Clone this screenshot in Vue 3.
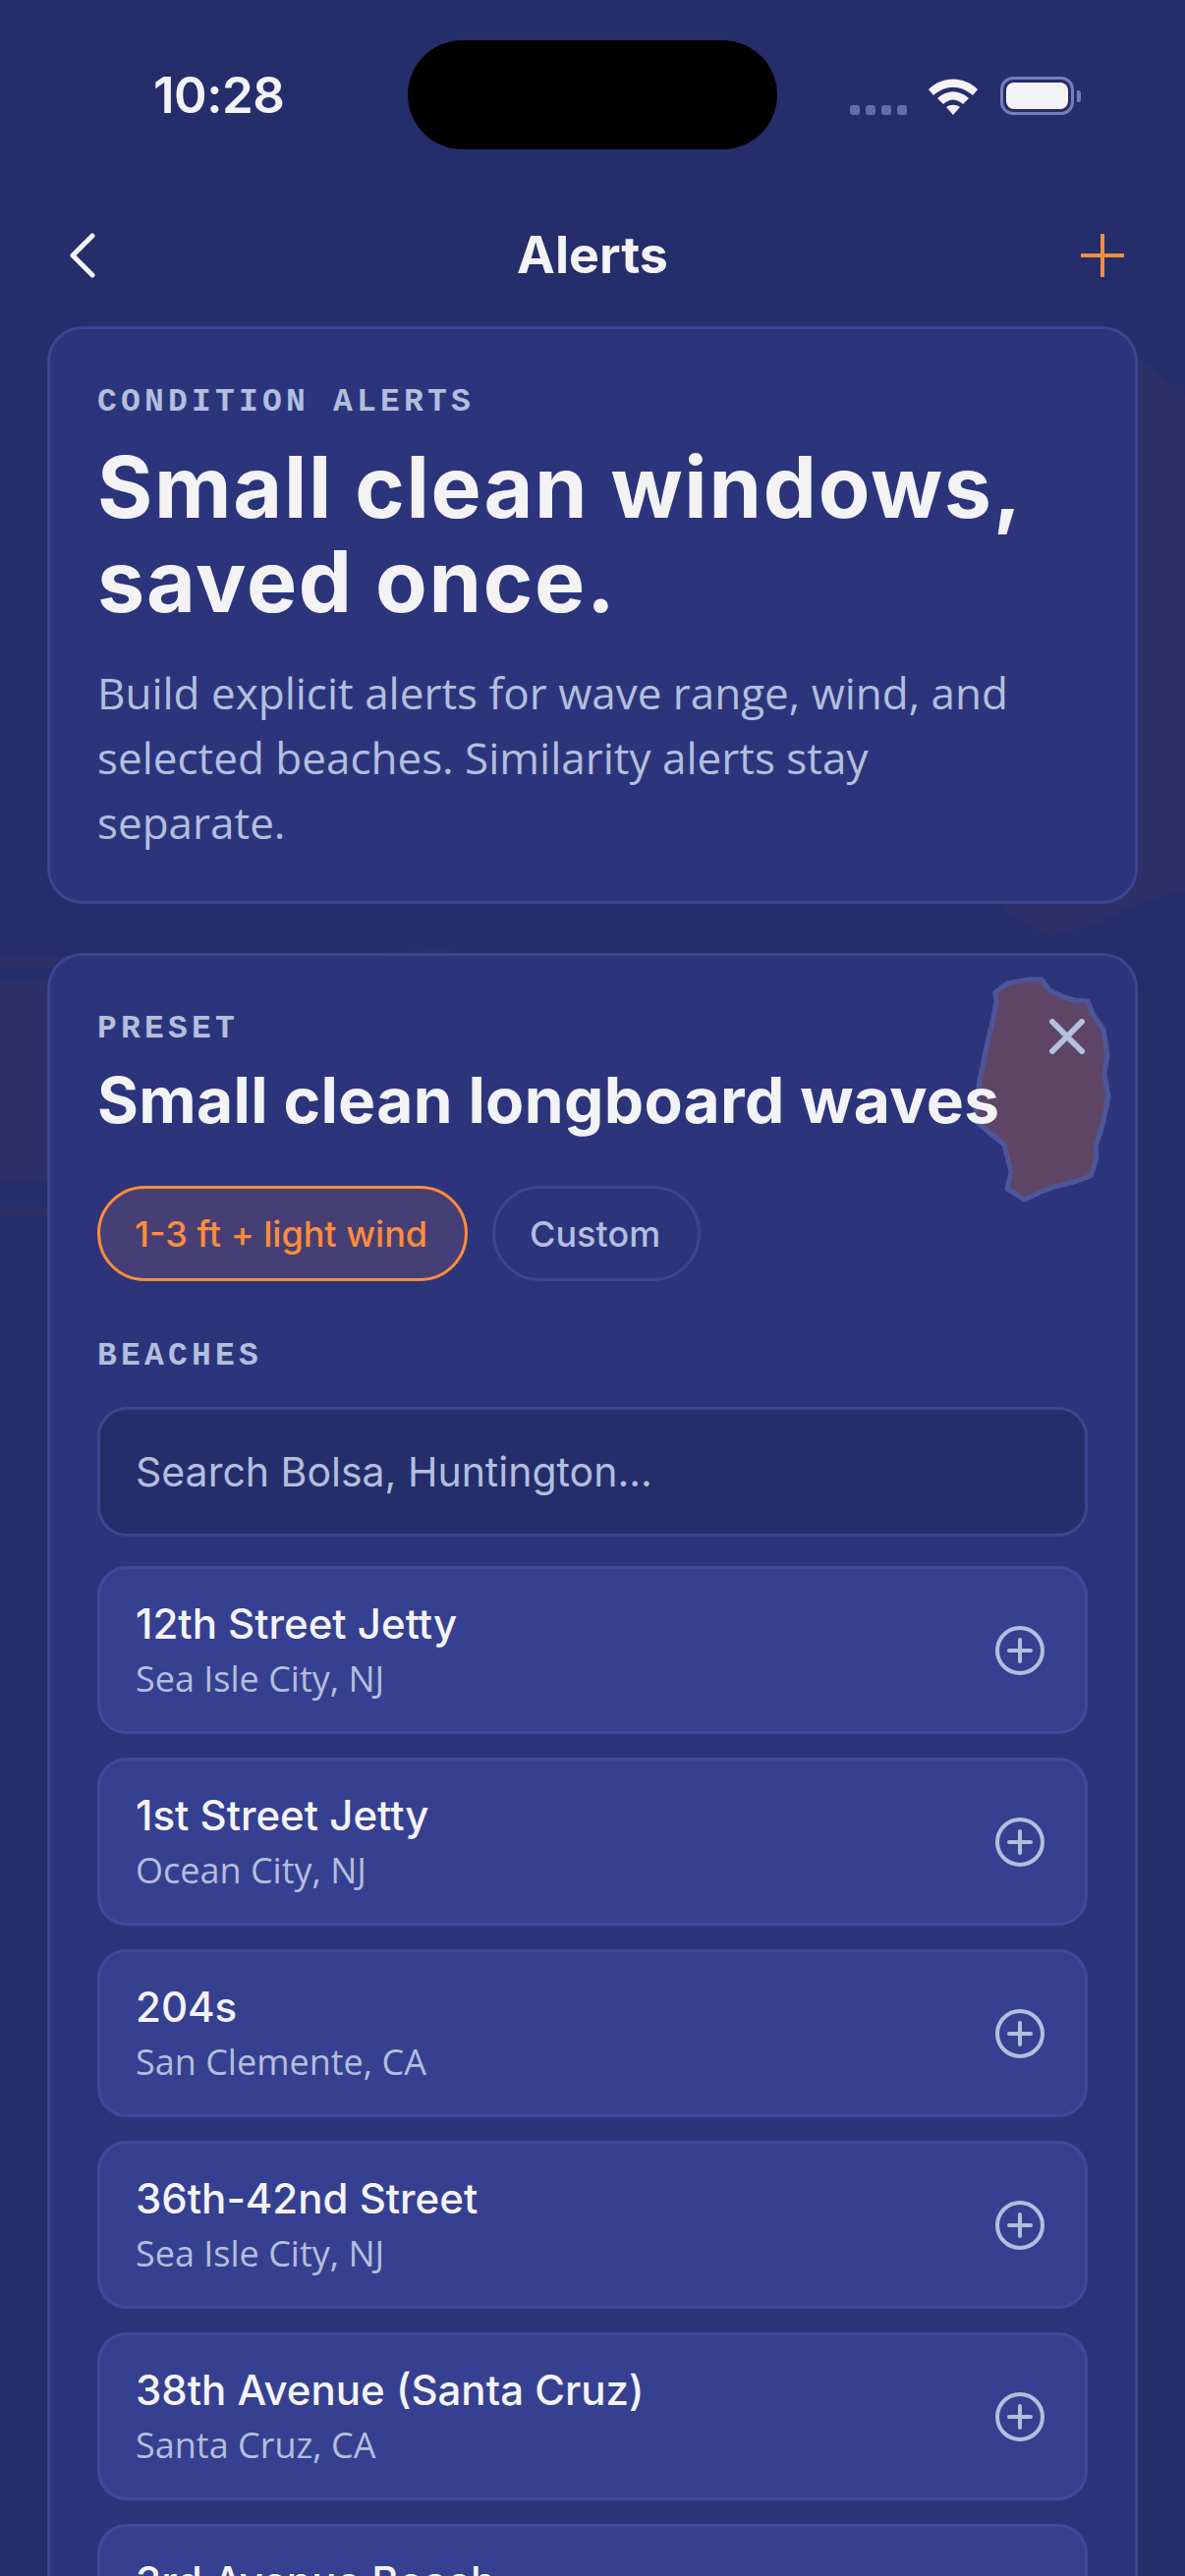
<script setup>
const beaches = [
  { name: '12th Street Jetty', place: 'Sea Isle City, NJ' },
  { name: '1st Street Jetty', place: 'Ocean City, NJ' },
  { name: '204s', place: 'San Clemente, CA' },
  { name: '36th-42nd Street', place: 'Sea Isle City, NJ' },
  { name: '38th Avenue (Santa Cruz)', place: 'Santa Cruz, CA' },
  { name: '3rd Avenue Beach' },
];
</script>

<template>
  <div class="screen">
    <svg class="land" viewBox="0 0 1206 2622" width="1206" height="2622" aria-hidden="true">
      <path class="land__shape" d="M1150 358 L1206 402 V907 L1167 916 L1113 942 L1067 953 L1020 925 Z" />
      <path class="land__shape" d="M0 973 H300 L460 966 V985 H0 Z M0 998 H120 V1203 H0 Z M0 1228 H60 V1238 H0 Z" />
    </svg>

    <header class="status">
      <span class="status__time">10:28</span>
      <span class="status__island"></span>
      <div class="status__icons">
        <div class="status__dots"><i></i><i></i><i></i><i></i></div>
        <svg class="status__wifi" viewBox="0 0 50 37" width="50" height="37">
          <path d="M0 11 C14 -3 36 -3 50 11 L45 17 C32 6 18 6 5 17 Z" />
          <path d="M9 20 C19 11 31 11 41 20 L35 26 C28 20 22 20 15 26 Z" />
          <path d="M18 29 C22 26 28 26 32 29 L25 37 Z" />
        </svg>
        <div class="status__battery"><b></b></div>
        <span class="status__cap"></span>
      </div>
    </header>

    <nav class="nav">
      <svg class="nav__back" viewBox="0 0 27 46" width="27" height="46">
        <path d="M24 3 L4 23 L24 43" />
      </svg>
      <h1 class="nav__title">Alerts</h1>
      <svg class="nav__add" viewBox="0 0 44 44" width="44" height="44">
        <path d="M22 0 V44 M0 22 H44" />
      </svg>
    </nav>

    <main class="content">
      <section class="card hero">
        <p class="label">CONDITION ALERTS</p>
        <h2 class="hero__title">Small clean windows, saved once.</h2>
        <p class="hero__text">Build explicit alerts for wave range, wind, and selected beaches. Similarity alerts stay separate.</p>
      </section>

      <section class="card preset">
        <svg class="preset__blob" viewBox="0 0 150 240" width="150" height="240" aria-hidden="true">
          <path d="M25 24 L37 15 L59 11 L72 11 L80 22 L95 29 L105 32 L119 33 L124 46 L135 62 L139 87 L136 107 L140 131 L134 159 L127 181 L128 192 L122 211 L105 217 L85 222 L69 228 L55 235 L37 224 L41 207 L34 179 L19 167 L4 154 L9 114 L15 84 L22 54 L26 34 Z" />
        </svg>
        <svg class="preset__close" viewBox="0 0 36 36" width="36" height="36">
          <path d="M3 3 L33 33 M33 3 L3 33" />
        </svg>
        <div class="preset__body">
          <p class="label label--small">PRESET</p>
          <h2 class="preset__title">Small clean longboard waves</h2>
          <div class="chips">
            <span class="chip chip--active">1-3 ft + light wind</span>
            <span class="chip">Custom</span>
          </div>
          <p class="label label--small label--beaches">BEACHES</p>
          <div class="search">Search Bolsa, Huntington...</div>
          <ul class="beaches">
            <li v-for="beach in beaches" :key="beach.name" class="beach">
              <div class="beach__text">
                <span class="beach__name">{{ beach.name }}</span>
                <span v-if="beach.place" class="beach__place">{{ beach.place }}</span>
              </div>
              <svg class="beach__add" viewBox="0 0 50 50" width="50" height="50">
                <circle cx="25" cy="25" r="23" />
                <path d="M25 14 V36 M14 25 H36" />
              </svg>
            </li>
          </ul>
        </div>
      </section>
    </main>
  </div>
</template>

<style>
html,
body {
  margin: 0;
  background: #252d6b;
}
</style>

<style scoped>
.screen {
  position: relative;
  width: 1206px;
  height: 2622px;
  overflow: hidden;
  background: #252d6b;
  color: #f3f3f5;
  font-family: Inter, 'Liberation Sans', sans-serif;
}

.land {
  position: absolute;
  inset: 0;
}

.land__shape {
  fill: #2c2f68;
}

.status {
  position: relative;
  display: grid;
  grid-template-columns: 1fr 376px 1fr;
  padding-top: 41px;
  height: 111px;
}

.status__time {
  padding-left: 156px;
  font-size: 51px;
  font-weight: 600;
  line-height: 111px;
  letter-spacing: -0.5px;
}

.status__island {
  height: 111px;
  background: #000;
  border-radius: 56px;
}

.status__icons {
  display: flex;
  align-items: flex-end;
  align-self: start;
  padding: 37px 0 0 74px;
}

.status__dots {
  display: flex;
  gap: 6px;
  margin-right: 22px;
}

.status__dots i {
  width: 10px;
  height: 10px;
  border-radius: 3px;
  background: #646ea6;
}

.status__wifi {
  flex: none;
  fill: #f3f3f5;
  margin-right: 23px;
}

.status__battery {
  box-sizing: border-box;
  width: 75px;
  height: 39px;
  padding: 3px;
  border: 3px solid #7480ba;
  border-radius: 13px;
}

.status__battery b {
  display: block;
  height: 100%;
  background: #f3f3f5;
  border-radius: 8px;
}

.status__cap {
  width: 4px;
  height: 12px;
  margin: 0 0 13px 3px;
  background: #7480ba;
  border-radius: 0 3px 3px 0;
}

.nav {
  position: relative;
  display: grid;
  grid-template-columns: 1fr auto 1fr;
  align-items: center;
  height: 80px;
  margin: 68px 0 32px;
  padding: 0 62px 0 70px;
}

.nav__back {
  fill: none;
  stroke: #f3f3f5;
  stroke-width: 5;
  stroke-linecap: round;
  stroke-linejoin: round;
}

.nav__title {
  margin: 0 8px 0 0;
  font-size: 52px;
  font-weight: 700;
  line-height: 80px;
}

.nav__add {
  justify-self: end;
  fill: none;
  stroke: #ff8c3a;
  stroke-width: 4;
}

.content {
  position: relative;
  display: flex;
  flex-direction: column;
  gap: 50px;
  padding: 0 48px;
}

.card {
  position: relative;
  background: #2c357c;
  border: 3px solid #3b4590;
  border-radius: 36px;
}

.hero {
  box-sizing: border-box;
  height: 588px;
  padding: 55px 48px 0;
}

.label {
  margin: 0;
  color: #b3bede;
  font-family: 'Liberation Mono', monospace;
  font-size: 33px;
  font-weight: 700;
  line-height: 40px;
  letter-spacing: 4.2px;
}

.hero__title {
  margin: 18px 0 0;
  font-size: 86px;
  font-weight: 700;
  line-height: 96px;
  letter-spacing: 1.75px;
}

.hero__text {
  max-width: 950px;
  margin: 32px 0 0;
  color: #b3bede;
  font-family: 'Open Sans', sans-serif;
  font-size: 44px;
  line-height: 66px;
}

.preset {
  height: 1800px;
}

.preset__blob {
  position: absolute;
  left: 937px;
  top: 13px;
  fill: #5e4565;
  stroke: #4c5699;
  stroke-width: 5;
  stroke-linejoin: round;
}

.preset__close {
  position: absolute;
  left: 1017px;
  top: 64px;
  fill: none;
  stroke: #b3c0e0;
  stroke-width: 6;
  stroke-linecap: round;
}

.preset__body {
  position: relative;
  padding: 57px 48px 0;
}

.label--small {
  line-height: 36px;
}

.label--beaches {
  margin-top: 59px;
}

.preset__title {
  margin: 12px 0 0;
  font-size: 64px;
  font-weight: 700;
  line-height: 84px;
  letter-spacing: 0.35px;
  white-space: nowrap;
}

.chips {
  display: flex;
  gap: 25px;
  margin-top: 45px;
}

.chip {
  display: flex;
  align-items: center;
  box-sizing: border-box;
  height: 97px;
  padding: 0 38px 0 35px;
  color: #b3bede;
  border: 3px solid #3b4590;
  border-radius: 49px;
  font-size: 36px;
  font-weight: 500;
}

.chip--active {
  color: #ff8c3a;
  background: #463f75;
  border-color: #ff8c3a;
}

.search {
  box-sizing: border-box;
  height: 132px;
  margin-top: 33px;
  padding: 0 36px;
  color: #b3bede;
  background: #252d6b;
  border: 3px solid #3b4590;
  border-radius: 30px;
  font-size: 41px;
  line-height: 126px;
}

.beaches {
  display: flex;
  flex-direction: column;
  gap: 24px;
  margin: 30px 0 0;
  padding: 0;
  list-style: none;
}

.beach {
  display: flex;
  align-items: center;
  justify-content: space-between;
  box-sizing: border-box;
  height: 171px;
  padding: 0 41px 0 36px;
  background: #364090;
  border: 3px solid #404a98;
  border-radius: 30px;
}

.beach__text {
  display: flex;
  flex-direction: column;
  align-self: flex-start;
  padding-top: 27px;
}

.beach__name {
  font-size: 42px;
  font-weight: 500;
  line-height: 58px;
}

.beach__place {
  margin-top: 4px;
  color: #b3bede;
  font-family: 'Open Sans', sans-serif;
  font-size: 36px;
  line-height: 46px;
}

.beach__add {
  fill: none;
  stroke: #b3bede;
  stroke-width: 4;
  stroke-linecap: round;
}
</style>
